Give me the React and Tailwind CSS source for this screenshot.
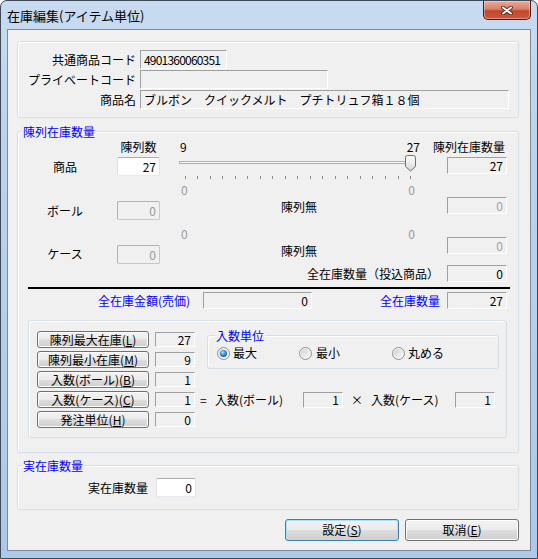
import React from "react";

const SUNKEN =
  "border border-t-[#a0a0a0] border-l-[#a0a0a0] border-r-white border-b-white";
const EDIT =
  "bg-white border rounded-[2px] border-t-[#abadb3] border-l-[#dbdfe6] border-r-[#e2e3ea] border-b-[#e3e9ef]";
const DISABLED =
  "bg-[#f0f0f0] border rounded-[2px] border-t-[#adb2b5] border-l-[#adb2b5] border-r-[#c8c8c8] border-b-[#c8c8c8] text-[#9a9a9a]";
const GROUP =
  "rounded-[3px] border border-[#d5dfe5] shadow-[inset_1px_1px_0_#ffffff]";
const BTN =
  "flex items-center justify-center rounded-[3px] border bg-[linear-gradient(180deg,#f2f2f2_0%,#ebebeb_50%,#dddddd_50%,#cfcfcf_100%)]";

function Button({ children, className, isDefault }) {
  return (
    <div
      className={`${BTN} ${
        isDefault
          ? "border-[#3c7fb1] shadow-[inset_0_0_0_1px_#a6e3fb]"
          : "border-[#707070] shadow-[inset_0_0_0_1px_#fcfcfc]"
      } ${className}`}
    >
      {children}
    </div>
  );
}

function Radio({ checked, id }) {
  return (
    <svg width="13" height="13" viewBox="0 0 13 13" className="shrink-0">
      <defs>
        <linearGradient id={`rg${id}`} x1="0" y1="0" x2="1" y2="1">
          <stop offset="0" stopColor="#d0d0d0" />
          <stop offset="1" stopColor="#fbfbfb" />
        </linearGradient>
        <radialGradient id={`rb${id}`} cx="0.4" cy="0.35" r="0.7">
          <stop offset="0" stopColor="#b6e4ff" />
          <stop offset="0.5" stopColor="#3d94d6" />
          <stop offset="1" stopColor="#16508a" />
        </radialGradient>
      </defs>
      <circle cx="6.5" cy="6.5" r="6" fill="#f4f4f4" stroke="#8e8f8f" />
      <circle cx="6.5" cy="6.5" r="4.5" fill={`url(#rg${id})`} />
      {checked && <circle cx="6.5" cy="6.5" r="3.5" fill={`url(#rb${id})`} />}
    </svg>
  );
}

function Slider() {
  const ticks = Array.from({ length: 19 }, (_, i) => Math.round(14.7 + i * 12.52) + 0.5);
  return (
    <svg width="250" height="27" viewBox="0 0 250 27" className="mt-[1px]">
      <defs>
        <linearGradient id="thumbg" x1="0" y1="0" x2="0" y2="1">
          <stop offset="0" stopColor="#f8f8f8" />
          <stop offset="0.5" stopColor="#ececec" />
          <stop offset="1" stopColor="#d2d2d2" />
        </linearGradient>
      </defs>
      <rect x="9.5" y="6.5" width="233" height="2" fill="#f6f6f6" stroke="#b0b0b0" />
      {ticks.map((t) => (
        <line key={t} x1={t} y1="21" x2={t} y2="24" stroke="#8a8a8a" />
      ))}
      <path
        d="M235.5 2.5 Q235.5 0.5 237.5 0.5 H243.5 Q245.5 0.5 245.5 2.5 V11.5 L240.5 16 L235.5 11.5 Z"
        fill="url(#thumbg)"
        stroke="#707070"
      />
    </svg>
  );
}

function CloseBtn() {
  return (
    <div className="mr-[6px] w-[48px] h-[19px] rounded-b-[5px] border border-t-0 border-[#4a1a10] bg-[linear-gradient(180deg,#eaa99a_0%,#d8806b_45%,#c4462c_55%,#cc5a3e_100%)] shadow-[inset_0_0_0_1px_rgba(255,255,255,0.35)] flex items-center justify-center">
      <svg width="12" height="9" viewBox="0 0 12 9">
        <path d="M2 1.5 L10 7.5 M10 1.5 L2 7.5" stroke="#4a2218" strokeWidth="3.6" strokeLinecap="round" />
        <path d="M2 1.5 L10 7.5 M10 1.5 L2 7.5" stroke="#ffffff" strokeWidth="2" strokeLinecap="round" />
      </svg>
    </div>
  );
}

function ValueRow({ label, value }) {
  return (
    <div className="flex items-center h-[17px]">
      <Button className="w-[112px] h-[17px]">{label}</Button>
      <div className={`ml-[6px] w-[40px] h-[15px] ${SUNKEN} flex items-center justify-end pr-[3px]`}>
        {value}
      </div>
    </div>
  );
}

export default function App() {
  return (
    <div className="w-[538px] h-[559px] whitespace-nowrap font-['Noto_Sans_CJK_JP',sans-serif] text-[12px] leading-[14px] text-black">
      <div className="w-full h-full flex flex-col rounded-t-[7px] border border-[#3e4a57] bg-[linear-gradient(180deg,#c8dbf0_0%,#bcd3ec_25%,#adc9e8_100%)]">
        {/* Title bar */}
        <div className="h-[28px] shrink-0 flex items-start justify-between">
          <div className="ml-[6px] mt-[7px] text-[13px] leading-[16px]">在庫編集(アイテム単位)</div>
          <CloseBtn />
        </div>

        {/* Client area */}
        <div className="mx-[6px] h-[522px] shrink-0 border border-[#7d8a99] bg-[#f0f0f0] flex flex-col">
          {/* Group 1 */}
          <div className={`ml-[9px] mt-[11px] w-[502px] h-[77px] ${GROUP} flex flex-col gap-[1px] pt-[8px]`}>
            <div className="flex items-center h-[19px]">
              <span className="w-[118px] text-right">共通商品コード</span>
              <div className={`ml-[4px] w-[87px] h-[19px] ${SUNKEN} flex items-center pl-[3px] tracking-[-0.8px]`}>
                4901360060351
              </div>
            </div>
            <div className="flex items-center h-[19px]">
              <span className="w-[118px] text-right">プライベートコード</span>
              <div className={`ml-[4px] w-[188px] h-[19px] ${SUNKEN}`}></div>
            </div>
            <div className="flex items-center h-[19px]">
              <span className="w-[118px] text-right">商品名</span>
              <div className={`ml-[4px] w-[369px] h-[19px] ${SUNKEN} flex items-center pl-[3px]`}>
                ブルボン　クイックメルト　プチトリュフ箱１８個
              </div>
            </div>
          </div>

          {/* Group 2 */}
          <div className={`ml-[9px] mt-[13px] w-[502px] h-[322px] ${GROUP} flex flex-col`}>
            <span className="-mt-[7px] ml-[4px] self-start bg-[#f0f0f0] px-[1px] text-[#0000ff]">陳列在庫数量</span>

            <div className="flex">
              {/* Col A */}
              <div className="ml-[11px] w-[72px] flex flex-col items-center">
                <span className="mt-[21px]">商品</span>
                <span className="mt-[30px]">ボール</span>
                <span className="mt-[29px]">ケース</span>
              </div>
              {/* Col B */}
              <div className="ml-[16px] w-[43px] flex flex-col">
                <span className="mt-[1px] text-center">陳列数</span>
                <div className={`mt-[3px] h-[19px] ${EDIT} flex items-center justify-end pr-[3px]`}>27</div>
                <div className={`mt-[25px] h-[19px] ${DISABLED} flex items-center justify-end pr-[3px]`}>0</div>
                <div className={`mt-[25px] h-[19px] ${DISABLED} flex items-center justify-end pr-[3px]`}>0</div>
              </div>
              {/* Col C */}
              <div className="ml-[10px] w-[250px] flex flex-col">
                <div className="mt-[1px] flex justify-between pl-[10px]">
                  <span>9</span>
                  <span>27</span>
                </div>
                <Slider />
                <div className="mt-[2px] h-[12px] leading-[12px] flex justify-between pl-[11px] pr-[5px] text-[#9a9a9a]">
                  <span>0</span>
                  <span>0</span>
                </div>
                <span className="mt-[4px] ml-[111px]">陳列無</span>
                <div className="mt-[14px] h-[12px] leading-[12px] flex justify-between pl-[11px] pr-[5px] text-[#9a9a9a]">
                  <span>0</span>
                  <span>0</span>
                </div>
                <span className="mt-[4px] ml-[111px]">陳列無</span>
              </div>
              {/* Col D */}
              <div className="ml-[12px] w-[75px] flex flex-col items-end">
                <span className="mt-[1px] pr-[2px]">陳列在庫数量</span>
                <div className={`mt-[3px] w-[60px] h-[17px] ${SUNKEN} flex items-center justify-end pr-[3px]`}>27</div>
                <div className={`mt-[23px] w-[60px] h-[17px] ${SUNKEN} flex items-center justify-end pr-[3px] text-[#a0a0a0]`}>0</div>
                <div className={`mt-[23px] w-[60px] h-[17px] ${SUNKEN} flex items-center justify-end pr-[3px] text-[#a0a0a0]`}>0</div>
              </div>
            </div>

            {/* total (投込商品) */}
            <div className="mt-[1px] h-[17px] flex items-center justify-end pr-[11px] gap-[8px]">
              <span>全在庫数量（投込商品）</span>
              <div className={`w-[60px] h-[17px] ${SUNKEN} flex items-center justify-end pr-[3px]`}>0</div>
            </div>

            <div className="mt-[5px] ml-[10px] mr-[8px] h-[2px] bg-black"></div>

            <div className="mt-[3px] h-[17px] flex items-center">
              <span className="ml-[80px] w-[105px] shrink-0 text-[#0000ff]">全在庫金額(売価)</span>
              <div className={`w-[109px] h-[17px] ${SUNKEN} flex items-center justify-end pr-[3px]`}>0</div>
              <span className="ml-[68px] w-[67px] shrink-0 text-[#0000ff]">全在庫数量</span>
              <div className={`w-[60px] h-[17px] ${SUNKEN} flex items-center justify-end pr-[3px]`}>27</div>
            </div>

            {/* Inner group */}
            <div className={`mt-[11px] ml-[10px] w-[479px] h-[118px] ${GROUP} flex`}>
              <div className="ml-[8px] mt-[10px] flex flex-col gap-[3px]">
                <ValueRow label={<>陳列最大在庫(<span className="underline">L</span>)</>} value="27" />
                <ValueRow label={<>陳列最小在庫(<span className="underline">M</span>)</>} value="9" />
                <ValueRow label={<>入数(ボール)(<span className="underline">B</span>)</>} value="1" />
                <ValueRow label={<>入数(ケース)(<span className="underline">C</span>)</>} value="1" />
                <ValueRow label={<>発注単位(<span className="underline">H</span>)</>} value="0" />
              </div>
              <div className="flex flex-col">
                <div className={`ml-[12px] mt-[14px] w-[292px] h-[34px] ${GROUP} flex flex-col`}>
                  <span className="-mt-[7px] ml-[7px] self-start bg-[#f0f0f0] px-[1px] text-[#0000ff]">入数単位</span>
                  <div className="mt-[3px] h-[14px] flex items-center">
                    <span className="ml-[9px]"><Radio checked id="a" /></span>
                    <span className="ml-[3px] w-[24px]">最大</span>
                    <span className="ml-[42px]"><Radio id="b" /></span>
                    <span className="ml-[4px] w-[24px]">最小</span>
                    <span className="ml-[52px]"><Radio id="c" /></span>
                    <span className="ml-[3px]">丸める</span>
                  </div>
                </div>
                <div className="mt-[22px] h-[17px] flex items-center">
                  <span className="ml-[5px] w-[15px] shrink-0">=</span>
                  <span className="w-[68px] shrink-0">入数(ボール)</span>
                  <div className={`ml-[20px] w-[40px] h-[16px] ${SUNKEN} flex items-center justify-end pr-[3px]`}>1</div>
                  <span className="ml-[8px] w-[20px] shrink-0">×</span>
                  <span className="w-[84px] shrink-0">入数(ケース)</span>
                  <div className={`w-[40px] h-[16px] ${SUNKEN} flex items-center justify-end pr-[3px]`}>1</div>
                </div>
              </div>
            </div>
          </div>

          {/* Group 3 */}
          <div className={`ml-[9px] mt-[12px] w-[502px] h-[45px] ${GROUP} flex flex-col`}>
            <span className="-mt-[7px] ml-[4px] self-start bg-[#f0f0f0] px-[1px] text-[#0000ff]">実在庫数量</span>
            <div className="mt-[5px] h-[19px] flex items-center">
              <span className="ml-[70px]">実在庫数量</span>
              <div className={`ml-[8px] w-[40px] h-[19px] ${EDIT} flex items-center justify-end pr-[3px]`}>0</div>
            </div>
          </div>

          {/* Buttons */}
          <div className="mt-[9px] h-[22px] flex justify-end gap-[6px] pr-[11px]">
            <Button isDefault className="w-[114px] h-[22px]">
              設定(<span className="underline">S</span>)
            </Button>
            <Button className="w-[114px] h-[22px]">
              取消(<span className="underline">E</span>)
            </Button>
          </div>
        </div>
      </div>
    </div>
  );
}
